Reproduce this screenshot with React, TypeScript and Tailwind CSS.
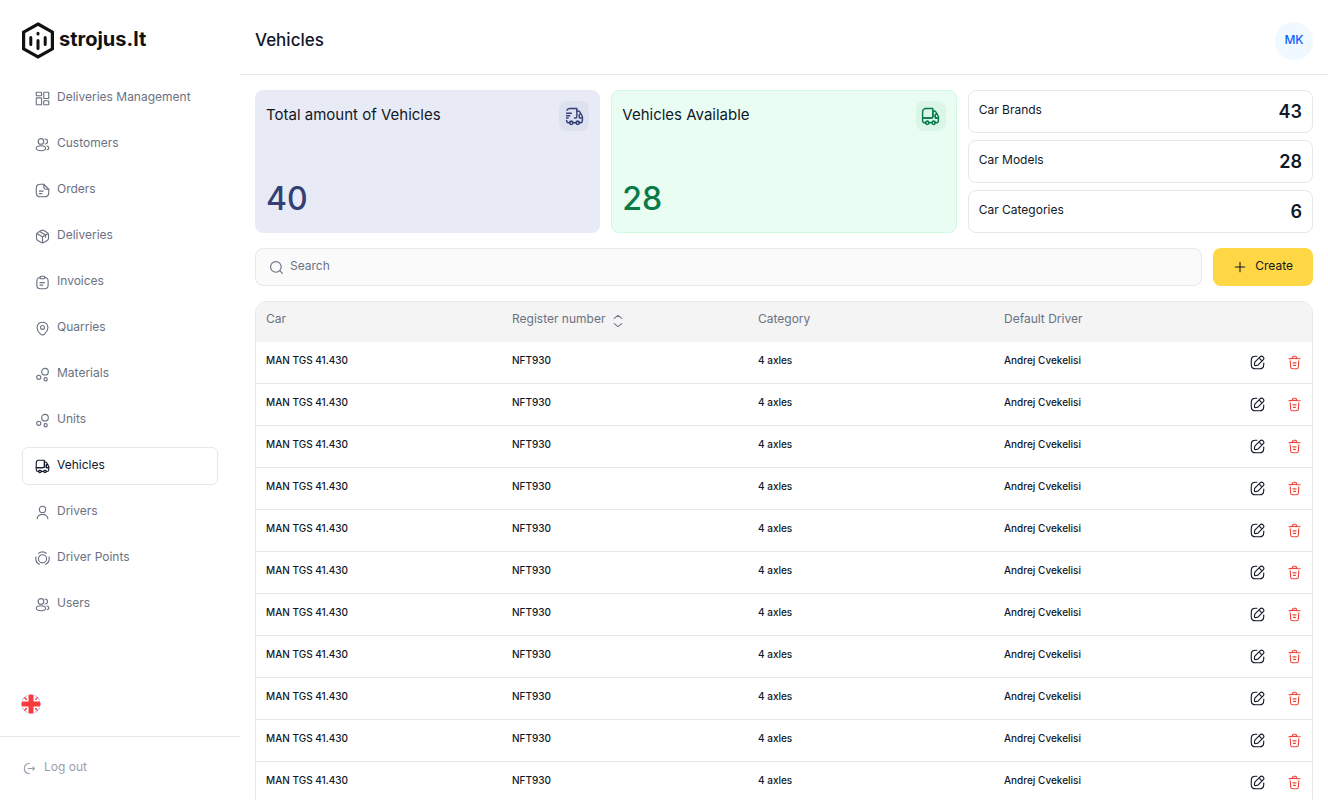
import type { ReactNode } from "react"

type IconName = keyof typeof icons

const users = (
  <>
    <circle cx="9.5" cy="7" r="4.5" />
    <path d="M16 11.2a4 4 0 0 0 0-8" />
    <ellipse cx="9.5" cy="18" rx="7.5" ry="4" />
    <path d="M19 14.5c1.9.4 3.2 1.5 3.2 2.9 0 1.3-1 2.3-2.6 2.8" />
  </>
)

const bubbles = (
  <>
    <circle cx="16" cy="7.5" r="5.3" />
    <circle cx="6" cy="16.5" r="3.3" />
    <circle cx="17" cy="19.5" r="2.6" />
  </>
)

const icons = {
  dashboard: (
    <>
      <rect x="2" y="2" width="8.5" height="5.5" rx="1" />
      <rect x="2" y="11" width="8.5" height="11" rx="1" />
      <rect x="14" y="2" width="8" height="10" rx="1" />
      <rect x="14" y="15.5" width="8" height="6.5" rx="1" />
    </>
  ),
  users,
  bubbles,
  document: (
    <>
      <path d="M22 10v5c0 5-2 7-7 7H9c-5 0-7-2-7-7V9c0-5 2-7 7-7h5" />
      <path d="M22 10h-4c-3 0-4-1-4-4V2l8 8ZM7 13h6M7 17h4" />
    </>
  ),
  box: (
    <>
      <path d="M3.17 7.44 12 12.55l8.77-5.08M12 21.61v-9.07M17 13.24V9.58L7.51 4.1" />
      <path d="M9.93 2.48 4.59 5.44c-1.21.67-2.2 2.35-2.2 3.73v5.65c0 1.38.99 3.06 2.2 3.73l5.34 2.97c1.14.63 3.01.63 4.15 0l5.34-2.97c1.21-.67 2.2-2.35 2.2-3.73V9.17c0-1.38-.99-3.06-2.2-3.73l-5.34-2.97c-1.15-.63-3.01-.63-4.15.01Z" />
    </>
  ),
  clipboard: (
    <>
      <path d="M8 12.2h7M8 16.2h4.38M10 6h4c2 0 2-1 2-2 0-2-1-2-2-2h-4C9 2 8 2 8 4s1 2 2 2Z" />
      <path d="M16 4.02c3.33.18 5 1.41 5 5.98v6c0 4-1 6-6 6H9c-5 0-6-2-6-6v-6c0-4.56 1.67-5.8 5-5.98" />
    </>
  ),
  pin: (
    <>
      <circle cx="12" cy="10.3" r="3.1" />
      <path d="M3.62 8.49c1.97-8.66 14.8-8.65 16.76.01 1.15 5.08-2.01 9.38-4.78 12.04a5.193 5.193 0 0 1-7.21 0c-2.76-2.66-5.92-6.97-4.77-12.05Z" />
    </>
  ),
  truck: (
    <>
      <path d="M15 2v10c0 1.1-.9 2-2 2H2V6c0-2.21 1.79-4 4-4h9Z" />
      <path d="M22 14v3c0 1.66-1.34 3-3 3h-1c0-1.1-.9-2-2-2s-2 .9-2 2h-4c0-1.1-.9-2-2-2s-2 .9-2 2H5c-1.66 0-3-1.34-3-3v-3h11c1.1 0 2-.9 2-2V5h1.84c.72 0 1.38.39 1.74 1.01L20.29 9H19c-.55 0-1 .45-1 1v3c0 .55.45 1 1 1h3Z" />
      <path d="M22 12v2h-3c-.55 0-1-.45-1-1v-3c0-.55.45-1 1-1h1.29L22 12Z" />
      <circle cx="8" cy="20" r="2" />
      <circle cx="16" cy="20" r="2" />
    </>
  ),
  truckFast: (
    <>
      <path d="M12 14h1c1.1 0 2-.9 2-2V2H6c-1.5 0-2.81.83-3.49 2.05M2 8h6M2 11h4M2 14h2" />
      <path d="M2 17c0 1.66 1.34 3 3 3h1c0-1.1.9-2 2-2s2 .9 2 2h4c0-1.1.9-2 2-2s2 .9 2 2h1c1.66 0 3-1.34 3-3v-3h-3c-.55 0-1-.45-1-1v-3c0-.55.45-1 1-1h1.29l-1.71-2.99A2.016 2.016 0 0 0 16.84 5H15" />
      <path d="M22 12v2M20.29 9 22 12" />
      <circle cx="8" cy="20" r="2" />
      <circle cx="16" cy="20" r="2" />
    </>
  ),
  user: (
    <>
      <circle cx="12" cy="7" r="5" />
      <path d="M20.59 22c0-3.87-3.85-7-8.59-7s-8.59 3.13-8.59 7" />
    </>
  ),
  points: (
    <>
      <circle cx="12" cy="12.5" r="6.5" />
      <path d="M5.8 3.6a10.5 10.5 0 0 1 12.4 0M1.6 9.5c-1.2 5 1 9.5 5.4 11.8M22.4 9.5c1.2 5-1 9.5-5.4 11.8" />
    </>
  ),
  logout: <path d="M17.44 14.62 20 12.06 17.44 9.5M9.76 12.06h10.17M11.76 20c-4.42 0-8-3-8-8s3.58-8 8-8" />,
  search: (
    <>
      <circle cx="11" cy="11" r="8.5" />
      <path d="m21.5 21.5-4-4" />
    </>
  ),
  plus: <path d="M4 12h16M12 20V4" />,
  sort: <path d="m5.5 7.5 6.5-5 6.5 5M5.5 16.5l6.5 5 6.5-5" />,
  edit: (
    <>
      <path d="M11 2H9C4 2 2 4 2 9v6c0 5 2 7 7 7h6c5 0 7-2 7-7v-2" />
      <path d="M16.04 3.02 8.16 10.9c-.3.3-.6.89-.66 1.32l-.43 3.01c-.16 1.09.61 1.85 1.7 1.7l3.01-.43c.42-.06 1.01-.36 1.32-.66l7.88-7.88c1.36-1.36 2-2.94 0-4.94-2-2-3.58-1.36-4.94 0ZM14.91 4.15a7.144 7.144 0 0 0 4.94 4.94" />
    </>
  ),
  trash: (
    <>
      <path d="M21 5.98c-3.33-.33-6.68-.5-10.02-.5-1.98 0-3.96.1-5.94.3L3 5.98M8.5 4.97l.22-1.31C8.88 2.71 9 2 10.69 2h2.62c1.69 0 1.82.75 1.97 1.67l.22 1.3" />
      <path d="m18.85 9.14-.65 10.07C18.09 20.78 18 22 15.21 22H8.79C6 22 5.91 20.78 5.8 19.21L5.15 9.14M10.33 16.5h3.33M9.5 12.5h5" />
    </>
  ),
}

function Icon({ name, className }: { name: IconName; className: string }) {
  return (
    <svg
      viewBox="0 0 24 24"
      fill="none"
      stroke="currentColor"
      strokeWidth="1.8"
      strokeLinecap="round"
      strokeLinejoin="round"
      aria-hidden="true"
      className={`shrink-0 ${className}`}
    >
      {icons[name]}
    </svg>
  )
}

const navItems: { label: string; icon: IconName }[] = [
  { label: "Deliveries Management", icon: "dashboard" },
  { label: "Customers", icon: "users" },
  { label: "Orders", icon: "document" },
  { label: "Deliveries", icon: "box" },
  { label: "Invoices", icon: "clipboard" },
  { label: "Quarries", icon: "pin" },
  { label: "Materials", icon: "bubbles" },
  { label: "Units", icon: "bubbles" },
  { label: "Vehicles", icon: "truck" },
  { label: "Drivers", icon: "user" },
  { label: "Driver Points", icon: "points" },
  { label: "Users", icon: "users" },
]

const counters = [
  { label: "Car Brands", value: 43 },
  { label: "Car Models", value: 28 },
  { label: "Car Categories", value: 6 },
]

const vehicles = Array.from({ length: 11 }, (_, id) => ({
  id,
  car: "MAN TGS 41.430",
  number: "NFT930",
  category: "4 axles",
  driver: "Andrej Cvekelisi",
}))

function Logo() {
  return (
    <a href="#" className="flex items-center gap-[5px] text-[#111]">
      <svg viewBox="0 0 32 37" className="h-[37px] w-8" fill="none" stroke="currentColor" aria-hidden="true">
        <path d="M16 2 30.4 10.2v16.6L16 35 1.6 26.8V10.2Z" strokeWidth="3.2" />
        <path d="M8.8 15.6v6.8M23.2 15.6v6.8M16 18.4v8.2M16 11.2v.8" strokeWidth="3" strokeLinecap="round" />
      </svg>
      <span className="pb-1 text-xl font-bold">strojus.lt</span>
    </a>
  )
}

function Flag() {
  return (
    <svg viewBox="0 0 20 20" className="size-5" aria-hidden="true">
      <clipPath id="flag">
        <circle cx="10" cy="10" r="9.5" />
      </clipPath>
      <g clipPath="url(#flag)">
        <rect width="20" height="20" fill="#3b5ba9" />
        <path d="m0 0 20 20M20 0 0 20" stroke="#fff" strokeWidth="4.5" />
        <path d="m0 0 20 20M20 0 0 20" stroke="#fb3b3b" strokeWidth="1.4" />
        <path d="M10 0v20M0 10h20" stroke="#fff" strokeWidth="8" />
        <path d="M10 0v20M0 10h20" stroke="#fb3b3b" strokeWidth="5" />
      </g>
    </svg>
  )
}

function Sidebar() {
  return (
    <aside className="flex w-60 shrink-0 flex-col">
      <div className="px-[22px] pt-[22px] pb-5">
        <Logo />
      </div>
      <nav className="flex flex-col gap-2 px-[22px]">
        {navItems.map((item) => (
          <a
            key={item.label}
            href="#"
            className={
              item.label === "Vehicles"
                ? "flex h-[38px] items-center gap-[7px] rounded-md border border-gray-200 px-3 text-gray-900"
                : "flex h-[38px] items-center gap-[7px] rounded-md border border-transparent px-3 text-gray-500"
            }
          >
            <Icon name={item.icon} className="size-[15px]" />
            <span className="pb-[3px] text-xs whitespace-nowrap">{item.label}</span>
          </a>
        ))}
      </nav>
      <div className="mt-auto">
        <button type="button" aria-label="Language" className="mb-[22px] ml-[21px] block">
          <Flag />
        </button>
        <div className="border-t border-gray-200 px-[22px] py-[22px]">
          <button type="button" className="flex items-center gap-[7px] text-gray-400">
            <Icon name="logout" className="size-[15px]" />
            <span className="pb-[3px] text-xs">Log out</span>
          </button>
        </div>
      </div>
    </aside>
  )
}

function StatCard({ title, value, tone, children }: { title: string; value: number; tone: string; children: ReactNode }) {
  return (
    <div className={`flex flex-col justify-between rounded-lg border px-[10px] pt-[10px] pb-3 ${tone}`}>
      <div className="flex items-start justify-between">
        <h2 className="pt-[3px] text-[15px] text-gray-900">{title}</h2>
        {children}
      </div>
      <p className="text-[32px] leading-[42px] font-medium">{value}</p>
    </div>
  )
}

function VehiclesTable() {
  return (
    <div className="mt-[15px] overflow-hidden rounded-t-xl border border-gray-200">
      <table className="w-full table-fixed border-collapse text-left">
        <thead>
          <tr className="h-[39px] border-b border-gray-100 bg-[#f4f4f4] text-xs text-gray-500">
            <th className="px-[10px] pb-1 font-normal">Car</th>
            <th className="px-[10px] pb-1 font-normal">
              <button type="button" className="flex items-center gap-[6px]">
                Register number
                <Icon name="sort" className="mt-1 size-[14px]" />
              </button>
            </th>
            <th className="px-[10px] pb-1 font-normal">Category</th>
            <th className="px-[10px] pb-1 font-normal">Default Driver</th>
            <th className="w-[72px]" aria-label="Actions"></th>
          </tr>
        </thead>
        <tbody>
          {vehicles.map((vehicle) => (
            <tr key={vehicle.id} className="h-[42px] border-b border-gray-200 text-[10px] font-medium text-gray-900">
              <td className="px-[10px] pb-[3px]">{vehicle.car}</td>
              <td className="px-[10px] pb-[3px]">{vehicle.number}</td>
              <td className="px-[10px] pb-[3px]">{vehicle.category}</td>
              <td className="px-[10px] pb-[3px]">{vehicle.driver}</td>
              <td>
                <div className="flex justify-end gap-[22px] pr-[10px]">
                  <button type="button" aria-label="Edit">
                    <Icon name="edit" className="size-[15px]" />
                  </button>
                  <button type="button" aria-label="Delete" className="text-[#f04438]">
                    <Icon name="trash" className="size-[15px]" />
                  </button>
                </div>
              </td>
            </tr>
          ))}
        </tbody>
      </table>
    </div>
  )
}

export default function App() {
  return (
    <div className="flex h-screen overflow-hidden bg-white font-['Inter',sans-serif]">
      <Sidebar />
      <div className="flex min-w-0 flex-1 flex-col">
        <header className="flex h-[75px] shrink-0 items-center justify-between border-b border-gray-200 px-[15px] pt-2">
          <h1 className="text-[17px] font-medium text-gray-900">Vehicles</h1>
          <button type="button" className="size-[38px] rounded-full bg-sky-50 pb-[3px] text-xs font-medium text-blue-600">
            MK
          </button>
        </header>
        <main className="min-h-0 flex-1 overflow-y-auto px-[15px] pt-[15px] [scrollbar-width:none]">
          <div className="grid grid-cols-3 gap-[11px]">
            <StatCard title="Total amount of Vehicles" value={40} tone="border-[#e8ebf5] bg-[#e8ebf5] text-[#343f76]">
              <span className="grid size-[30px] place-items-center rounded-lg bg-[#dde1f0]">
                <Icon name="truckFast" className="size-[19px]" />
              </span>
            </StatCard>
            <StatCard title="Vehicles Available" value={28} tone="border-[#d0f9e0] bg-[#eafdf3] text-[#087a48]">
              <span className="grid size-[30px] place-items-center rounded-lg bg-[#dbf5e9]">
                <Icon name="truck" className="size-[19px]" />
              </span>
            </StatCard>
            <div className="flex flex-col gap-[7px]">
              {counters.map((counter) => (
                <div key={counter.label} className="flex h-[43px] items-center justify-between rounded-lg border border-gray-200 px-[10px] text-gray-900">
                  <span className="pb-1 text-xs">{counter.label}</span>
                  <span className="text-lg font-semibold">{counter.value}</span>
                </div>
              ))}
            </div>
          </div>
          <div className="mt-[15px] flex gap-[11px]">
            <label className="flex h-[38px] flex-1 items-center gap-[6px] rounded-lg border border-gray-200 bg-[#fafafa] px-[13px] text-gray-500">
              <Icon name="search" className="size-[15px]" />
              <input
                type="text"
                placeholder="Search"
                aria-label="Search"
                className="w-full bg-transparent pb-[3px] text-xs outline-none placeholder:text-gray-500"
              />
            </label>
            <button type="button" className="flex h-[38px] items-center gap-2 rounded-lg bg-[#ffd643] px-5 text-gray-900">
              <Icon name="plus" className="size-[14px]" />
              <span className="pb-[3px] text-xs">Create</span>
            </button>
          </div>
          <VehiclesTable />
        </main>
      </div>
    </div>
  )
}
